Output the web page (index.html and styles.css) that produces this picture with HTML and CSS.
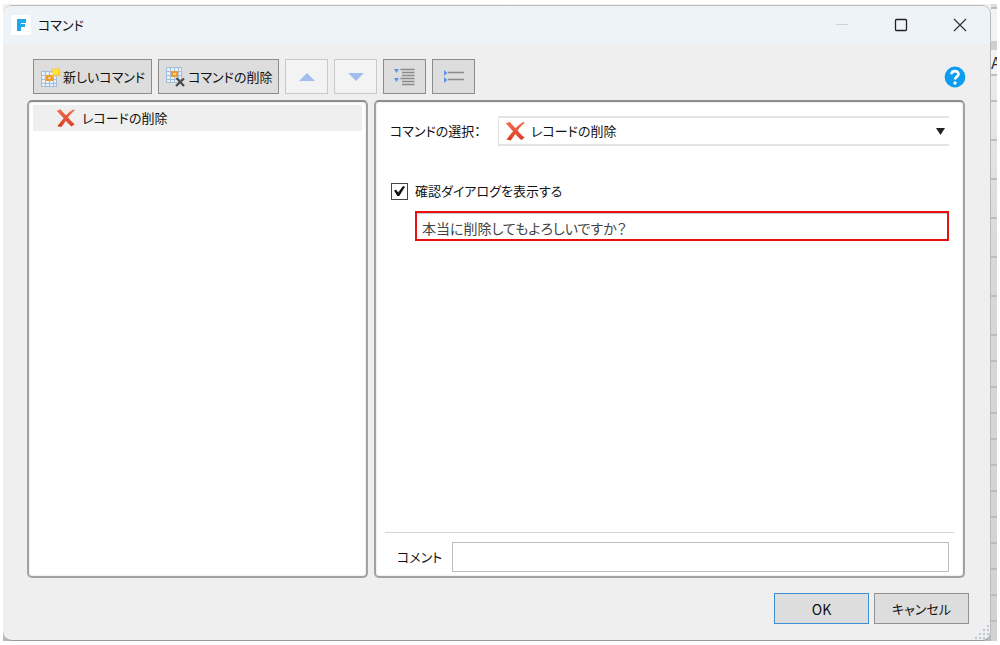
FILE: index.html
```
<!DOCTYPE html>
<html lang="ja">
<head>
    <meta charset="UTF-8">
    <meta name="viewport" content="width=device-width, initial-scale=1.0">
    <title>コマンド</title>
    <link rel="stylesheet" href="styles.css">
</head>
<body>
    <!-- shared shapes -->
    <svg class="defs" width="0" height="0" aria-hidden="true">
        <linearGradient id="red" x1="0" y1="0" x2="0" y2="1">
            <stop offset="0" stop-color="#f0704e"/>
            <stop offset="1" stop-color="#dc3a20"/>
        </linearGradient>
        <symbol id="cross" viewBox="0 0 20 20">
            <path d="M0.800 2.500 L4.800 0.800 C7 3.600 9 5.800 10.600 7.200 C13 4.600 15.800 2.200 18.800 0.800 L19.600 2 C16.600 4.500 14.200 7 12.700 9.400 C14.600 12 17 14.400 19.600 16.600 L16.400 19 C13.800 17 12 15 10.400 13 C8.600 15.600 7 17.800 5.800 19.400 L1.400 18.600 C3.400 16 5.800 12.800 8.100 10.200 C5.600 7.400 3 4.600 0.800 2.500 Z" fill="url(#red)"/>
        </symbol>
        <symbol id="grid" viewBox="0 0 20 20">
            <rect x="1" y="3" width="16" height="16" fill="#a3bdd6"/>
            <path d="M2 4h3v3h-3z M6 4h3v3h-3z M10 4h3v3h-3z M14 4h2v3h-2z M2 8h3v3h-3z M14 8h2v3h-2z M2 12h3v3h-3z M6 12h3v3h-3z M10 12h3v3h-3z M14 12h2v3h-2z M2 16h3v2h-3z M6 16h3v2h-3z M10 16h3v2h-3z M14 16h2v2h-2z" fill="#e4f0fa"/>
            <rect x="6" y="7" width="7" height="6" fill="#f09a2c"/>
            <rect x="8" y="9" width="3" height="2" fill="#ffd27a"/>
        </symbol>
    </svg>

    <div class="desktop">
        <main class="window">
            <header class="titlebar">
                <svg class="app-icon" width="20" height="20" viewBox="0 0 20 20" aria-hidden="true">
                    <rect width="20" height="20" rx="2" fill="#fff"/>
                    <path d="M6 4h9v4h-5v1h4v3h-4v4h-4z" fill="#1fa8ee"/>
                </svg>
                <h1>コマンド</h1>
                <div class="window-buttons">
                    <button type="button" aria-label="最小化">
                        <svg width="14" height="14" viewBox="0 0 14 14"><path d="M1 6.5h12" stroke="#cdd1d5"/></svg>
                    </button>
                    <button type="button" aria-label="最大化">
                        <svg width="14" height="14" viewBox="0 0 14 14"><rect x="1.5" y="1.5" width="11" height="11" rx="1" fill="none" stroke="#222" stroke-width="1.3"/></svg>
                    </button>
                    <button type="button" aria-label="閉じる">
                        <svg width="14" height="14" viewBox="0 0 14 14"><path d="M1 1l12 12M13 1L1 13" stroke="#333" stroke-width="1.2"/></svg>
                    </button>
                </div>
            </header>

            <div class="content">
                <div class="toolbar">
                    <button type="button" class="tool-button">
                        <svg width="22" height="22" viewBox="0 0 22 22" aria-hidden="true">
                            <use href="#grid" x="0" y="2" width="20" height="20"/>
                            <path d="M16 0l1 4 3-3-1 4 3 1-3 1 2 3-4-1-1 3-1-3-3 2 1-4-3-1 3-1-2-3 4 2z" fill="#ffc21c"/>
                            <circle cx="16" cy="6" r="3" fill="#ffe23a"/>
                        </svg>
                        新しいコマンド
                    </button>
                    <button type="button" class="tool-button">
                        <svg width="22" height="22" viewBox="0 0 22 22" aria-hidden="true">
                            <use href="#grid" x="0" y="-2" width="20" height="20"/>
                            <path d="M11.5 12l7.5 8M19 12.5l-8 7.5" stroke="#4a4a4a" stroke-width="2.2"/>
                        </svg>
                        コマンドの削除
                    </button>
                    <button type="button" class="icon-button" aria-label="上へ" disabled>
                        <svg width="16" height="8" viewBox="0 0 16 8"><path d="M0 8L8 0l8 8z" fill="#a1bdee"/></svg>
                    </button>
                    <button type="button" class="icon-button" aria-label="下へ" disabled>
                        <svg width="16" height="8" viewBox="0 0 16 8"><path d="M0 0l8 8 8-8z" fill="#a1bdee"/></svg>
                    </button>
                    <button type="button" class="icon-button" aria-label="すべて展開">
                        <svg width="22" height="18" viewBox="0 0 22 18">
                            <path d="M0 1h5l-2.500 4z M0 10h5l-2.500 4z" fill="#5f93e8"/>
                            <path d="M6.500 1.500h14M8 4.500h12.500M8 7.500h12.500M6.500 10.500h14M8 13.500h12.500M8 16.500h12.500" stroke="#8b8b8b" stroke-width="1.500"/>
                        </svg>
                    </button>
                    <button type="button" class="icon-button" aria-label="すべて折りたたむ">
                        <svg width="22" height="18" viewBox="0 0 22 18">
                            <path d="M1 2l3.500 3-3.500 3z M1 9l3.500 3-3.500 3z" fill="#5f93e8"/>
                            <path d="M5 4.500h16M5 11.500h16" stroke="#8b8b8b" stroke-width="1.300"/>
                        </svg>
                    </button>
                    <button type="button" class="help-button" aria-label="ヘルプ">
                        <svg width="22" height="22" viewBox="0 0 22 22">
                            <circle cx="11" cy="11" r="10.400" fill="#0c9df0"/>
                            <path d="M7.500 8.300C7.700 4 14.500 4.100 14.500 8.200 14.500 10.600 11 10.700 11 13.600" fill="none" stroke="#fff" stroke-width="2.600"/>
                            <circle cx="11" cy="17" r="1.700" fill="#fff"/>
                        </svg>
                    </button>
                </div>

                <div class="panels">
                    <ul class="panel command-list">
                        <li class="selected">
                            <svg width="19" height="20" aria-hidden="true"><use href="#cross"/></svg>
                            レコードの削除
                        </li>
                    </ul>

                    <section class="panel details">
                        <div class="command-row">
                            <label for="command">コマンドの選択：</label>
                            <div class="combo">
                                <svg width="20" height="20" aria-hidden="true"><use href="#cross"/></svg>
                                <select id="command">
                                    <option>レコードの削除</option>
                                </select>
                                <svg class="arrow" width="9" height="7" viewBox="0 0 9 7" aria-hidden="true"><path d="M0 0h9L4.500 7z" fill="#222"/></svg>
                            </div>
                        </div>
                        <div class="check-row">
                            <input type="checkbox" id="confirm" checked>
                            <label for="confirm">確認ダイアログを表示する</label>
                        </div>
                        <input type="text" class="message" aria-label="確認メッセージ" value="本当に削除してもよろしいですか？">
                        <div class="comment-row">
                            <label for="comment">コメント</label>
                            <input type="text" id="comment">
                        </div>
                    </section>
                </div>

                <footer class="actions">
                    <button type="button" class="default">OK</button>
                    <button type="button">キャンセル</button>
                </footer>
            </div>
            <svg class="grip" width="14" height="14" viewBox="0 0 14 14" aria-hidden="true">
                <path d="M12 0h2v2h-2z M8 4h2v2h-2z M12 4h2v2h-2z M4 8h2v2h-2z M8 8h2v2h-2z M12 8h2v2h-2z M0 12h2v2h-2z M4 12h2v2h-2z M8 12h2v2h-2z" fill="#bcc8d6"/>
            </svg>
        </main>

        <!-- sliver of the sheet behind the dialog -->
        <div class="sheet" aria-hidden="true">
            <div class="bar"></div>
            <div class="head"></div>
            <div class="letter">A</div>
            <div class="short"></div>
            <div class="tall"></div>
            <div class="tall"></div>
            <div class="tall"></div>
            <div class="tall"></div>
            <div class="tall"></div>
            <div class="tall"></div>
            <div class="short"></div>
            <div class="short"></div>
            <div class="short"></div>
            <div class="short"></div>
            <div class="short"></div>
            <div class="short"></div>
            <div class="short"></div>
            <div class="short"></div>
            <div class="short"></div>
            <div class="short"></div>
            <div class="short"></div>
        </div>
    </div>
</body>
</html>
```

FILE: styles.css
```
* {
    box-sizing: border-box;
}

body {
    margin: 0;
    padding: 4px 3px;
    background-color: #fff;
    color: #111;
}

body, button, input, select {
    font-family: "Noto Sans CJK JP", sans-serif;
    font-size: 13px;
    line-height: 20px;
    font-feature-settings: "palt";
}

.defs {
    position: absolute;
}

svg {
    display: block;
    flex: none;
}

.desktop {
    display: flex;
    min-height: calc(100vh - 8px);
    background: linear-gradient(#f0f0f0, #b8b8b8);
}

.window {
    position: relative;
    flex: 1;
    display: flex;
    flex-direction: column;
    margin-top: 1px;
    border: 1px solid #bbb;
    border-left: none;
    border-bottom-color: #999;
    border-radius: 9px;
    background-color: #efefef;
    overflow: hidden;
}

.titlebar {
    display: flex;
    align-items: center;
    height: 38px;
    padding-left: 8px;
    background-color: #eef3f8;
}

.titlebar h1 {
    margin: 0 0 0 7px;
    font-size: 13px;
    font-weight: normal;
}

.window-buttons {
    display: flex;
    margin-left: auto;
    padding-right: 1px;
}

.window-buttons button {
    display: flex;
    align-items: center;
    justify-content: center;
    width: 59px;
    height: 38px;
    padding: 0;
    border: none;
    background: none;
}

.content {
    flex: 1;
    display: flex;
    flex-direction: column;
    padding: 15px 21px 16px 24px;
}

.toolbar {
    display: flex;
    align-items: center;
    gap: 6px;
    padding-left: 6px;
}

.toolbar button {
    display: flex;
    align-items: center;
    justify-content: center;
    height: 35px;
    padding: 0;
    border: 1px solid #8c8c8c;
    background-color: #ddd;
    color: #111;
}

.toolbar .tool-button {
    gap: 1px;
    padding: 0 6px;
}

.toolbar .icon-button {
    width: 43px;
}

.toolbar .icon-button:disabled {
    border-color: #c6cacd;
    background-color: #f3f3f3;
}

.toolbar .help-button {
    margin-left: auto;
    margin-right: 3px;
    border: none;
    background: none;
}

.panels {
    flex: 1;
    display: grid;
    grid-template-columns: 341px 1fr;
    gap: 6px;
    margin: 6px 4px 15px 0;
}

.panel {
    margin: 0;
    border: 2px solid #a2a2a2;
    border-top-color: #8e8e8e;
    border-radius: 5px;
    background-color: #fff;
    box-shadow: inset 0 0 2px #ccc;
}

.command-list {
    padding: 3px 4px;
    list-style: none;
}

.command-list li {
    display: flex;
    align-items: center;
    gap: 7px;
    height: 26px;
    padding-left: 23px;
}

.command-list .selected {
    background-color: #efefef;
}

.details {
    display: flex;
    flex-direction: column;
    padding: 14px 14px 4px;
}

.command-row {
    display: flex;
    align-items: center;
}

.command-row label {
    width: 108px;
}

.combo {
    flex: 1;
    display: flex;
    align-items: center;
    height: 30px;
    padding: 0 4px 0 6px;
    border: 2px solid #e4e4e4;
    border-width: 2px 0 2px 1px;
}

.combo select {
    flex: 1;
    padding: 0 6px;
    border: none;
    background: none;
    color: #111;
    appearance: none;
}

.check-row {
    display: flex;
    align-items: center;
    gap: 7px;
    margin-top: 35px;
}

.check-row input {
    display: grid;
    place-items: center;
    width: 17px;
    height: 17px;
    margin: 0 0 0 1px;
    border: 1px solid #444;
    background-color: #fff;
    appearance: none;
}

/* tick mark */
.check-row input:checked::before {
    content: "";
    width: 11px;
    height: 10px;
    background-color: #111;
    clip-path: polygon(0 45%, 20% 38%, 38% 65%, 82% 0, 100% 8%, 48% 100%, 30% 100%);
}

.message {
    height: 30px;
    margin: 10px 0 0 25px;
    padding: 3px 5px 0;
    border: 2px solid #ea1010;
    background-color: #fff;
    box-shadow: inset 0 1px #c9c9c9;
    color: #444;
    font-size: 14px;
}

.comment-row {
    display: flex;
    align-items: center;
    margin: auto -5px 0;
    padding: 9px 5px 0 12px;
    border-top: 1px solid #d4d4d4;
}

.comment-row label {
    width: 55px;
}

.comment-row input {
    flex: 1;
    height: 30px;
    border: 1px solid #bbbec2;
    background-color: #fff;
}

.actions {
    display: flex;
    justify-content: flex-end;
    gap: 5px;
}

.actions button {
    width: 95px;
    height: 31px;
    padding: 0;
    border: 1px solid #929292;
    background-color: #ddd;
    color: #111;
}

.actions .default {
    border-color: #3d8fd1;
    font-size: 14px;
}

.grip {
    position: absolute;
    right: 1px;
    bottom: 1px;
}

.sheet {
    width: 6px;
    overflow: hidden;
    background: linear-gradient(#f3f3f3, #d8d8d8 40%, #d2d2d2);
}

.sheet div {
    border-bottom: 2px solid #bdbdbd;
}

.sheet .bar {
    height: 5px;
    background-color: #ddd;
}

.sheet .head {
    height: 41px;
    background-color: #f3f3f3;
    border-bottom: 9px solid #cfcfcf;
}

.sheet .letter {
    height: 26px;
    padding-top: 2px;
    background-color: #f3f3f3;
    color: #234;
    font-size: 16px;
}

.sheet .short {
    height: 26px;
}

.sheet .tall {
    height: 39px;
}
```
